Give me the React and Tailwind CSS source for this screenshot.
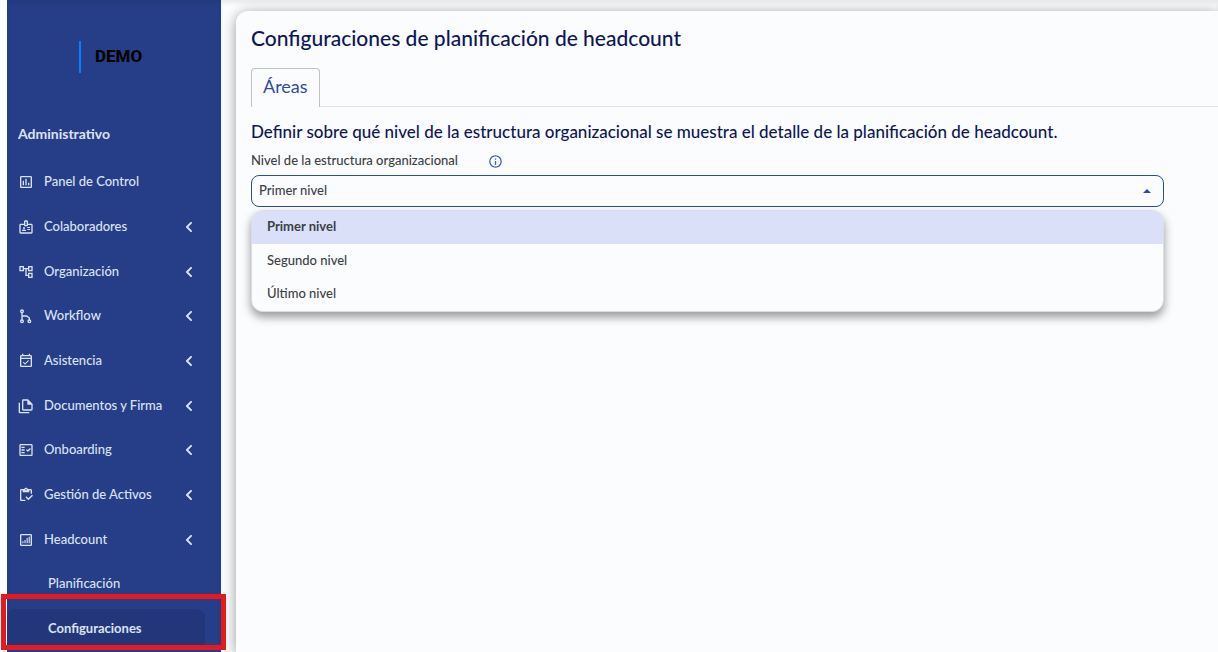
import React, { useState } from "react";
import {
  MdOutlineAccountTree,
  MdOutlineAssessment,
  MdOutlineBadge,
  MdOutlineEventAvailable,
  MdOutlineFactCheck,
  MdOutlineInfo,
  MdOutlineInventory,
} from "react-icons/md";
import { FaChevronLeft } from "react-icons/fa";

const WorkflowIcon = ({ className }) => (
  <svg
    viewBox="0 0 24 24"
    fill="none"
    stroke="currentColor"
    strokeWidth="2"
    className={className}
  >
    <circle cx="6" cy="5" r="2" />
    <circle cx="6" cy="20" r="2" />
    <circle cx="17" cy="20" r="2" />
    <path d="M6 7v11M6 12h7l4 3v3" />
  </svg>
);

const DocumentsIcon = ({ className }) => (
  <svg viewBox="0 0 24 24" fill="currentColor" className={className}>
    <path d="M3 7H1v14a2 2 0 0 0 2 2h14v-2H3V7z" />
    <path d="M15 2H8a2 2 0 0 0-2 2v13a2 2 0 0 0 2 2h12a2 2 0 0 0 2-2V9l-7-7zM8 17V4h6v6h6v7H8z" />
  </svg>
);

const HeadcountIcon = ({ className }) => (
  <svg viewBox="0 0 24 24" fill="currentColor" className={className}>
    <path d="M5 3a2 2 0 0 0-2 2v14a2 2 0 0 0 2 2h14a2 2 0 0 0 2-2V5a2 2 0 0 0-2-2H5zm0 2h14v14H5V5z" />
    <path d="M6.500 14h1.700v3H6.500zM9.700 12h1.700v5H9.700zM12.900 9h1.700v8h-1.700zM16 7h1.700v10H16z" />
  </svg>
);

const menu = [
  { label: "Panel de Control", icon: MdOutlineAssessment },
  { label: "Colaboradores", icon: MdOutlineBadge, group: true },
  { label: "Organización", icon: MdOutlineAccountTree, group: true },
  { label: "Workflow", icon: WorkflowIcon, group: true },
  { label: "Asistencia", icon: MdOutlineEventAvailable, group: true },
  { label: "Documentos y Firma", icon: DocumentsIcon, group: true },
  { label: "Onboarding", icon: MdOutlineFactCheck, group: true },
  { label: "Gestión de Activos", icon: MdOutlineInventory, group: true },
  { label: "Headcount", icon: HeadcountIcon, group: true },
  { label: "Planificación" },
  { label: "Configuraciones", active: true },
];

const levels = ["Primer nivel", "Segundo nivel", "Último nivel"];

const MenuItem = ({ item }) => {
  const Icon = item.icon;

  if (!Icon) {
    return (
      <a
        href="#"
        className={
          item.active
            ? "mr-4 flex h-10 items-center rounded-lg bg-[#23367a] pl-[41px] font-bold"
            : "mr-4 flex h-10 items-center pl-[41px] font-medium"
        }
      >
        {item.label}
      </a>
    );
  }

  return (
    <a
      href="#"
      className="flex h-10 items-center pr-[26px] pl-[11px] font-medium"
    >
      <Icon className="mr-[10px] size-4 shrink-0" />
      <span className="flex-1">{item.label}</span>
      {item.group && <FaChevronLeft className="size-3" />}
    </a>
  );
};

const Sidebar = () => (
  <aside className="relative z-10 h-screen w-[214px] shrink-0 bg-[#263e87] text-[13px] text-[#dbe3f3] shadow-[inset_0_3px_4px_rgba(0,0,0,0.08)]">
    <div className="flex h-[114px] items-center pl-[72px]">
      <div className="flex h-8 items-center border-l-2 border-[#0a7cff] pl-[14px] font-['Roboto',sans-serif] text-[17px] font-extrabold text-black">
        DEMO
      </div>
    </div>
    <h2 className="flex h-10 items-center pl-[11px] text-[14px] leading-5 font-bold">
      Administrativo
    </h2>
    <ul className="pt-2">
      {menu.map((item) => (
        <li
          key={item.label}
          className="relative pb-[5px] last:pb-0 nth-[3n]:pb-1"
        >
          <MenuItem item={item} />
          {item.active && (
            <div className="pointer-events-none absolute -top-[15px] -right-[5px] -left-[6px] h-14 border-5 border-[#e8191c]" />
          )}
        </li>
      ))}
    </ul>
  </aside>
);

const LevelSelect = () => {
  const [level, setLevel] = useState(levels[0]);
  const [open, setOpen] = useState(true);

  function toggle(e) {
    e.preventDefault();
    setOpen(!open);
  }

  function choose(value) {
    setLevel(value);
    setOpen(false);
  }

  return (
    <div className="relative">
      <select
        id="level"
        value={level}
        onMouseDown={toggle}
        onChange={(e) => setLevel(e.target.value)}
        className="block h-8 w-full appearance-none rounded-lg border border-[#2d4aa5] bg-transparent px-[7px] pb-px text-[13px] font-medium text-[#3c3f45] outline-none"
      >
        {levels.map((l) => (
          <option key={l}>{l}</option>
        ))}
      </select>
      <svg
        viewBox="0 0 8 4"
        className="pointer-events-none absolute top-[14px] right-[13px] h-1 w-2 fill-[#2d4aa5]"
      >
        <path d="M4 0l4 4H0z" />
      </svg>
      {open && (
        <ul
          role="listbox"
          className="absolute inset-x-0 top-full mt-[3px] overflow-hidden rounded-xl border border-[#dcdde0] bg-[#fbfcfe] pb-px text-[13px] text-[#3c3f45] shadow-[0_5px_10px_rgba(0,0,0,0.4)]"
        >
          {levels.map((l) => (
            <li
              key={l}
              role="option"
              aria-selected={l === level}
              onClick={() => choose(l)}
              className={
                l === level
                  ? "flex h-[33px] items-center bg-[#d9e0f8] px-[15px] pb-px font-bold"
                  : "flex h-[33px] items-center px-[15px] font-medium"
              }
            >
              {l}
            </li>
          ))}
        </ul>
      )}
    </div>
  );
};

const App = () => {
  return (
    <div className="flex h-screen overflow-hidden bg-[#fcfdfe] pl-[7px] font-['Lato',sans-serif]">
      <Sidebar />
      <main className="min-w-0 flex-1 pt-[11px] pl-[15px] shadow-[inset_0_3px_4px_rgba(0,0,0,0.08)]">
        <div className="h-full rounded-tl-xl bg-[#fbfcfe] pt-[11px] pl-[15px] shadow-[0_2px_14px_rgba(0,0,0,0.4)]">
          <h1 className="text-[21px] leading-8 font-medium text-[#0d1757]">
            Configuraciones de planificación de headcount
          </h1>
          <div
            role="tablist"
            className="mt-[14px] flex h-[39px] border-b border-[#dee1e5]"
          >
            <button
              role="tab"
              aria-selected="true"
              className="-mb-px rounded-t border border-b-0 border-[#bfc3c8] bg-[#fbfcfe] px-[11px] pb-1 text-[18px] text-[#2d4aa5]"
            >
              Áreas
            </button>
          </div>
          <h2 className="mt-[11px] text-[17px] leading-7 font-medium text-[#0d1757]">
            Definir sobre qué nivel de la estructura organizacional se muestra
            el detalle de la planificación de headcount.
          </h2>
          <div className="mr-[54px]">
            <div className="flex h-[29px] items-center gap-[30px] pt-px">
              <label
                htmlFor="level"
                className="text-[13px] font-medium text-[#3c3f45]"
              >
                Nivel de la estructura organizacional
              </label>
              <MdOutlineInfo className="size-[15px] text-[#3a5bc7]" />
            </div>
            <LevelSelect />
          </div>
        </div>
      </main>
    </div>
  );
};

export default App;
